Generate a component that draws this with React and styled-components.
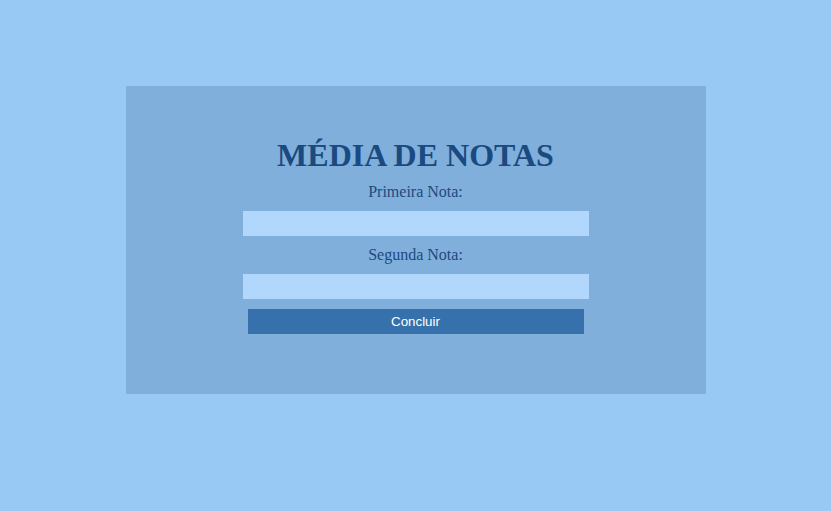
import styled, { createGlobalStyle } from "styled-components";

const Global = createGlobalStyle`
  body {
    margin: 0;
    background: #98c8f4;
    font-family: "Liberation Serif", "Times New Roman", serif;
  }
`;

export default function App() {
    return (
        <>
            <Global />
            <Page>
                <Card>
                    <Title>MÉDIA DE NOTAS</Title>
                    <Label htmlFor="n1">Primeira Nota:</Label>
                    <Input id="n1" type="text" />
                    <Label htmlFor="n2">Segunda Nota:</Label>
                    <Input id="n2" type="text" />
                    <Button>Concluir</Button>
                </Card>
            </Page>
        </>
    );
}

const Page = styled.div`
    display: flex;
    justify-content: center;
    padding-top: 86px;
`;

const Card = styled.div`
    width: 580px;
    height: 308px;
    box-sizing: border-box;
    background: #80afdc;
    padding-top: 51px;
    display: flex;
    flex-direction: column;
    align-items: center;
    gap: 10px;
`;

const Title = styled.h1`
    margin: 0;
    font-size: 32px;
    line-height: 36px;
    font-weight: bold;
    color: #1a4a80;
`;

const Label = styled.label`
    font-size: 16px;
    line-height: 18px;
    color: #1d4a7e;
`;

const Input = styled.input`
    width: 346px;
    height: 25px;
    box-sizing: border-box;
    border: none;
    outline: none;
    background: #b1d8fc;
    padding: 0 6px;
`;

const Button = styled.button`
    width: 336px;
    height: 25px;
    border: none;
    background: #3771ac;
    color: #ffffff;
    font-family: "Liberation Sans", Arial, sans-serif;
    font-size: 13.333px;
    cursor: pointer;
`;
